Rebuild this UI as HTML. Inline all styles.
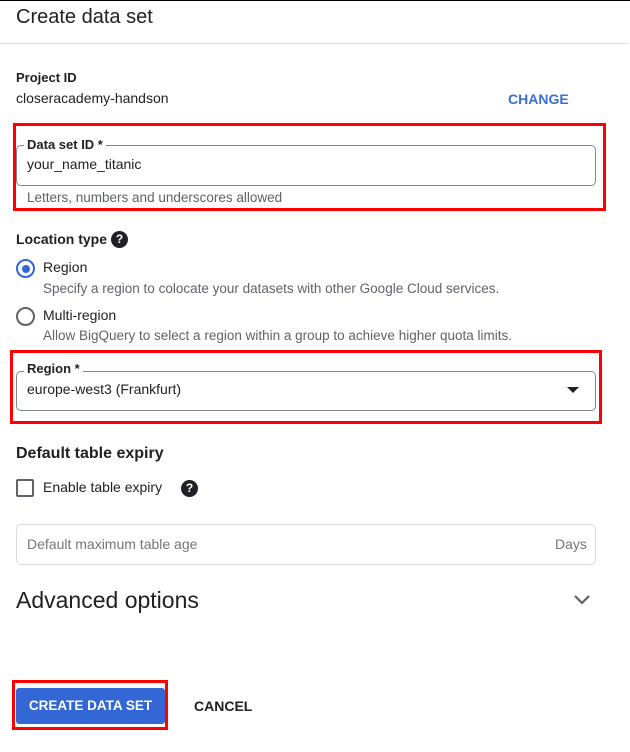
<!DOCTYPE html>
<html><head><meta charset="utf-8"><style>
*{box-sizing:border-box;margin:0;padding:0}
body{width:630px;height:752px;background:#fff;font-family:"Liberation Sans",Arial,sans-serif;color:#202124;position:relative;overflow:hidden}
.a{position:absolute;white-space:nowrap}
.topline{position:absolute;left:0;top:0;width:630px;height:1px;background:#000}
.div{position:absolute;left:0;top:43px;width:627px;height:1px;background:#dadce0}
.red{position:absolute;border:3px solid #f00}
.field{position:absolute;border:1px solid #80868b;border-radius:5px}
.lbl{position:absolute;background:#fff;padding:0 3px;font-size:13px;font-weight:bold;color:#202124;line-height:14px}
.q{position:absolute;width:17px;height:17px;border-radius:50%;background:#202124;color:#fff;font-size:12px;font-weight:bold;text-align:center;line-height:17px}
.gray{color:#5f6368}
</style></head><body>
<div class="topline"></div>
<div class="a" style="left:16px;top:6px;font-size:20px">Create data set</div>
<div class="div"></div>
<div class="a" style="left:16px;top:70px;font-size:13px;font-weight:bold">Project ID</div>
<div class="a" style="left:16px;top:90px;font-size:14px">closeracademy-handson</div>
<div class="a" style="left:508px;top:91px;font-size:14px;font-weight:bold;color:#3b6fd4">CHANGE</div>

<div class="red" style="left:13px;top:123px;width:593px;height:88px"></div>
<div class="field" style="left:16px;top:145px;width:580px;height:41px"></div>
<div class="lbl" style="left:24px;top:138px">Data set ID *</div>
<div class="a" style="left:27px;top:156px;font-size:14px">your_name_titanic</div>
<div class="a gray" style="left:27px;top:190px;font-size:13.5px">Letters, numbers and underscores allowed</div>

<div class="a" style="left:16px;top:231px;font-size:14px;font-weight:bold">Location type</div>
<div class="q" style="left:111px;top:231px">?</div>
<div class="a" style="left:16px;top:259px;width:19px;height:19px;border:2px solid #3367d6;border-radius:50%"><div style="position:absolute;left:3.5px;top:3.5px;width:8px;height:8px;border-radius:50%;background:#3367d6"></div></div>
<div class="a" style="left:43px;top:259px;font-size:14px">Region</div>
<div class="a gray" style="left:43px;top:281px;font-size:13.5px">Specify a region to colocate your datasets with other Google Cloud services.</div>
<div class="a" style="left:16px;top:307px;width:19px;height:19px;border:2px solid #5f6368;border-radius:50%"></div>
<div class="a" style="left:43px;top:307px;font-size:14px">Multi-region</div>
<div class="a gray" style="left:43px;top:328px;font-size:13.5px">Allow BigQuery to select a region within a group to achieve higher quota limits.</div>

<div class="red" style="left:10px;top:350px;width:592px;height:74px"></div>
<div class="field" style="left:16px;top:371px;width:580px;height:40px"></div>
<div class="lbl" style="left:24px;top:362px">Region *</div>
<div class="a" style="left:27px;top:381px;font-size:14px">europe-west3 (Frankfurt)</div>
<div class="a" style="left:567px;top:387px;width:0;height:0;border-left:6px solid transparent;border-right:6px solid transparent;border-top:6px solid #202124"></div>

<div class="a" style="left:16px;top:445px;font-size:16px;font-weight:bold">Default table expiry</div>
<div class="a" style="left:16px;top:479px;width:18px;height:18px;border:2px solid #5f6368;border-radius:2px"></div>
<div class="a" style="left:43px;top:479px;font-size:14px">Enable table expiry</div>
<div class="q" style="left:181px;top:480px">?</div>

<div class="a" style="left:16px;top:524px;width:580px;height:41px;border:1px solid #dadce0;border-radius:5px"></div>
<div class="a gray" style="left:27px;top:536px;font-size:14px;color:#757575">Default maximum table age</div>
<div class="a gray" style="left:555px;top:536px;font-size:14px;color:#757575">Days</div>

<div class="a" style="left:16px;top:587px;font-size:23px">Advanced options</div>
<svg class="a" style="left:571px;top:592px" width="22" height="16" viewBox="0 0 22 16"><path d="M4 4 L11 11 L18 4" fill="none" stroke="#5f6368" stroke-width="2.2"/></svg>

<div class="red" style="left:12px;top:680px;width:156px;height:50px"></div>
<div class="a" style="left:16px;top:688px;width:149px;height:36px;background:#3367d6;border-radius:3px;color:#fff;font-size:13.5px;font-weight:bold;text-align:center;line-height:36px">CREATE DATA SET</div>
<div class="a" style="left:194px;top:698px;font-size:14px;font-weight:bold">CANCEL</div>
</body></html>
